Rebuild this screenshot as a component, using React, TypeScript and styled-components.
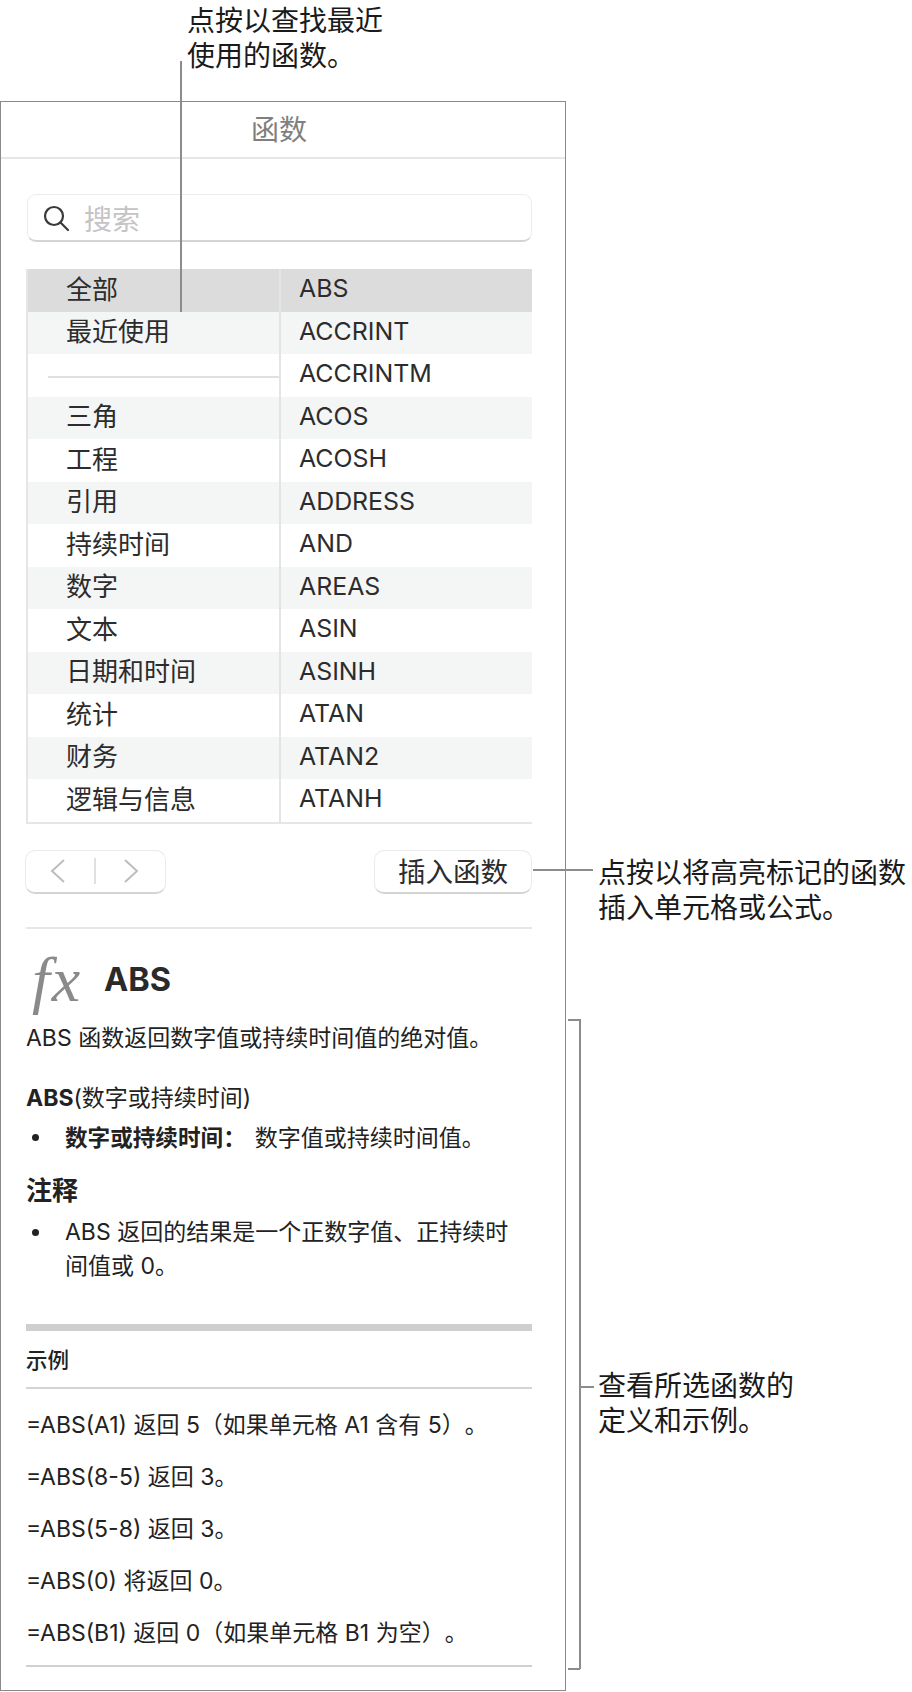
import React from "react";
import styled, { createGlobalStyle } from "styled-components";

const Global = createGlobalStyle`
  html, body { margin: 0; padding: 0; background: #fff; }
  body { font-family: Inter, "Noto Sans CJK SC", sans-serif; color: #1f1f1f; text-spacing-trim: space-all; }
`;
const Page = styled.div`
  position: relative;
  width: 912px;
  height: 1692px;
  overflow: hidden;
  padding-top: 101px;
  box-sizing: border-box;
`;
const Panel = styled.div`
  width: 566px;
  height: 1590px;
  box-sizing: border-box;
  border: 1px solid #8a8a8a;
  padding: 0 33px 0 25px;
  display: flex;
  flex-direction: column;
`;
const Title = styled.div`
  margin: 0 -33px 0 -25px;
  height: 57px;
  border-bottom: 2px solid #e6e6e6;
  display: flex;
  align-items: center;
  justify-content: center;
  font-size: 28px;
  color: #7f7f7f;
  padding: 0 8px 3px 0;
  box-sizing: border-box;
`;
const Search = styled.div`
  margin: 35px 0 0 1px;
  height: 48px;
  box-sizing: border-box;
  border: 1px solid #ececec;
  border-bottom: 2px solid #d4d4d4;
  border-radius: 9px;
  display: flex;
  align-items: center;
  gap: 14px;
  padding-left: 14px;
  font-size: 28px;
  color: #c4c4c4;
`;
const Table = styled.div`
  margin-top: 27px;
  display: grid;
  grid-template-columns: 251px 1fr;
  border-bottom: 2px solid #e6e6e6;
  border-left: 2px solid #e6e6e6;
`;
const Cell = styled.div<{ $tone: string; $second?: boolean }>`
  height: 42.5px;
  display: flex;
  align-items: center;
  box-sizing: border-box;
  background: ${(p) => p.$tone};
  padding-left: ${(p) => (p.$second ? "18px" : "38px")};
  padding-bottom: ${(p) => (p.$second ? "4px" : "6px")};
  border-left: ${(p) => (p.$second ? "2px solid #e4e4e4" : "none")};
  font-size: ${(p) => (p.$second ? "24.9px" : "26px")};
  color: #2c2c2c;
`;
const RuleCell = styled.div`
  height: 42.5px;
  box-sizing: border-box;
  padding: 3px 0 0 20px;
  display: flex;
  align-items: center;
  &::after {
    content: "";
    flex: 1;
    height: 2px;
    background: #e0e0e0;
  }
`;
const Controls = styled.div`
  margin-top: 26px;
  display: flex;
  justify-content: space-between;
  margin-left: -1px;
`;
const NavGroup = styled.div`
  width: 141px;
  height: 44px;
  box-sizing: border-box;
  border: 1px solid #eaeaea;
  border-bottom: 2px solid #d4d4d4;
  border-radius: 10px;
  display: flex;
  align-items: center;
  justify-content: space-between;
  padding: 0 26px 0 24px;
`;
const NavSep = styled.div`
  width: 2px;
  height: 26px;
  background: #e0e0e0;
`;
const InsertButton = styled.div`
  width: 158px;
  height: 44px;
  box-sizing: border-box;
  border: 1px solid #eaeaea;
  border-bottom: 2px solid #d4d4d4;
  border-radius: 10px;
  display: flex;
  align-items: center;
  justify-content: center;
  padding-bottom: 2px;
  font-size: 27.5px;
  color: #2c2c2c;
`;
const Divider = styled.div<{ $top: number; $h?: number; $c?: string }>`
  margin-top: ${(p) => p.$top}px;
  height: ${(p) => p.$h ?? 2}px;
  background: ${(p) => p.$c ?? "#e6e6e6"};
  flex: none;
`;
const Head = styled.div`
  display: flex;
  align-items: center;
  height: 76px;
  margin-top: 13px;
`;
const Fx = styled.span`
  font-family: "Liberation Serif", serif;
  font-style: italic;
  font-size: 64px;
  letter-spacing: 2px;
  color: #8a8a8a;
  width: 78px;
  padding-left: 6px;
  box-sizing: border-box;
  line-height: 1;
`;
const FnName = styled.span`
  font-size: 32.5px;
  font-weight: 700;
  color: #2a2a2a;
`;
const Body = styled.div<{ $top: number; $weight?: number; $size?: number }>`
  margin-top: ${(p) => p.$top}px;
  font-size: ${(p) => p.$size ?? 23}px;
  line-height: 31px;
  font-weight: ${(p) => p.$weight ?? 400};
  color: #222;
  white-space: nowrap;
`;
const Bullet = styled.div<{ $top: number }>`
  margin-top: ${(p) => p.$top}px;
  padding-left: 39px;
  position: relative;
  font-size: 23px;
  line-height: 33.5px;
  color: #222;
  white-space: nowrap;
  &::before {
    content: "";
    position: absolute;
    left: 6px;
    top: 13px;
    width: 7px;
    height: 7px;
    border-radius: 50%;
    background: #222;
  }
`;
const Strong = styled.strong`
  font-weight: 700;
  font-size: 22.6px;
  margin-right: 9px;
`;
const Callout = styled.div<{ $x: number; $y: number }>`
  position: absolute;
  left: ${(p) => p.$x}px;
  top: ${(p) => p.$y}px;
  font-size: 28px;
  line-height: 34.5px;
  color: #1a1a1a;
  white-space: nowrap;
`;
const Line = styled.div<{ $x: number; $y: number; $w: number; $h: number }>`
  position: absolute;
  left: ${(p) => p.$x}px;
  top: ${(p) => p.$y}px;
  width: ${(p) => p.$w}px;
  height: ${(p) => p.$h}px;
  background: #8c8c8c;
`;

const cats = ["全部", "最近使用", null, "三角", "工程", "引用", "持续时间", "数字", "文本", "日期和时间", "统计", "财务", "逻辑与信息"];
const fns = ["ABS", "ACCRINT", "ACCRINTM", "ACOS", "ACOSH", "ADDRESS", "AND", "AREAS", "ASIN", "ASINH", "ATAN", "ATAN2", "ATANH"];
const tone = (i: number) => (i === 0 ? "#dcdcdc" : i % 2 === 1 ? "#f4f5f5" : "#fff");

export default function App() {
  return (
    <Page>
      <Global />
      <Panel>
        <Title>函数</Title>
        <Search>
          <svg width="28" height="28" viewBox="0 0 28 28" fill="none" stroke="#3a3a3a" strokeWidth="2.2">
            <circle cx="12" cy="12" r="9" />
            <path d="M18.5 18.5 L26 26" strokeLinecap="round" />
          </svg>
          搜索
        </Search>
        <Table>
          {cats.map((c, i) => (
            <React.Fragment key={i}>
              {c ? <Cell $tone={tone(i)}>{c}</Cell> : <RuleCell />}
              <Cell $tone={tone(i)} $second>{fns[i]}</Cell>
            </React.Fragment>
          ))}
        </Table>
        <Controls>
          <NavGroup>
            <svg width="16" height="26" viewBox="0 0 16 26" fill="none" stroke="#bdbdbd" strokeWidth="2"><path d="M14 2 L2 13 L14 24" /></svg>
            <NavSep />
            <svg width="16" height="26" viewBox="0 0 16 26" fill="none" stroke="#bdbdbd" strokeWidth="2"><path d="M2 2 L14 13 L2 24" /></svg>
          </NavGroup>
          <InsertButton>插入函数</InsertButton>
        </Controls>
        <Divider $top={33} />
        <Head>
          <Fx>fx</Fx>
          <FnName>ABS</FnName>
        </Head>
        <Body $top={5}>ABS 函数返回数字值或持续时间值的绝对值。</Body>
        <Body $top={29}><b>ABS</b>(数字或持续时间)</Body>
        <Bullet $top={7}><Strong>数字或持续时间：</Strong>数字值或持续时间值。</Bullet>
        <Body $top={20} $weight={700} $size={26}>注释</Body>
        <Bullet $top={10}>ABS 返回的结果是一个正数字值、正持续时<br />间值或 0。</Bullet>
        <Divider $top={41} $h={7} $c="#cfcfcf" />
        <Body $top={14} $size={21.5} $weight={500}>示例</Body>
        <Divider $top={11} $c="#d4d4d4" />
        <Body $top={21}>=ABS(A1) 返回 5（如果单元格 A1 含有 5）。</Body>
        <Body $top={21}>=ABS(8-5) 返回 3。</Body>
        <Body $top={21}>=ABS(5-8) 返回 3。</Body>
        <Body $top={21}>=ABS(0) 将返回 0。</Body>
        <Body $top={21}>=ABS(B1) 返回 0（如果单元格 B1 为空）。</Body>
        <Divider $top={16} $c="#d0d0d0" />
      </Panel>

      <Callout $x={187} $y={4}>点按以查找最近<br />使用的函数。</Callout>
      <Line $x={180} $y={61} $w={2} $h={251} />
      <Callout $x={598} $y={856}>点按以将高亮标记的函数<br />插入单元格或公式。</Callout>
      <Line $x={533} $y={869} $w={60} $h={2} />
      <Callout $x={598} $y={1369}>查看所选函数的<br />定义和示例。</Callout>
      <Line $x={568} $y={1019} $w={12} $h={2} />
      <Line $x={579} $y={1019} $w={2} $h={650} />
      <Line $x={568} $y={1668} $w={12} $h={2} />
      <Line $x={580} $y={1386} $w={14} $h={2} />
    </Page>
  );
}
